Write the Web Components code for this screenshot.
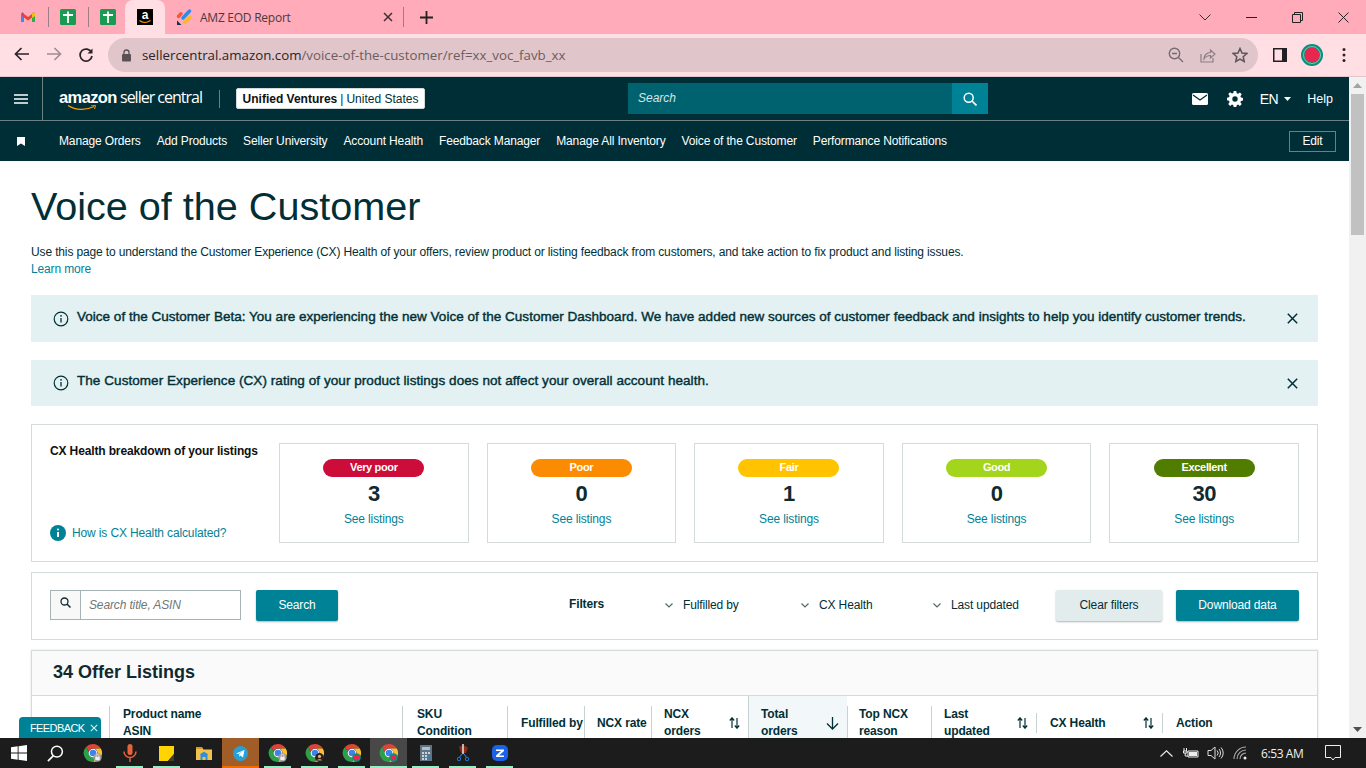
<!DOCTYPE html>
<html lang="en">
<head>
<meta charset="UTF-8">
<title>Voice of the Customer</title>
<style>
    html, body { margin: 0; height: 100%; overflow: hidden; background: #fff; }
    body { font-family: "Liberation Sans", Arial, sans-serif; color: #002f36; }
    #app { display: flex; flex-direction: column; height: 768px; width: 1366px; position: relative; }
</style>
</head>
<body>
<div id="app">
    <browser-frame url="sellercentral.amazon.com" path="/voice-of-the-customer/ref=xx_voc_favb_xx" tab="AMZ EOD Report"></browser-frame>
    <seller-header></seller-header>
    <seller-subnav></seller-subnav>
    <page-scroller>
        <voc-page></voc-page>
    </page-scroller>
    <feedback-tab></feedback-tab>
    <win-taskbar></win-taskbar>
</div>

<script>
    // small helper, every component sets its markup this way
    function shadow(el, html) {
        const root = el.attachShadow({mode: 'open'});
        root.innerHTML = html;
        return root;
    }

    // Chrome logo used in the taskbar, badge = lock | person | melon
    function chromeLogo(badge) {
        let extra = '';
        if (badge === 'lock') extra = '<circle cx="14.5" cy="14.5" r="4.2" fill="#9a9a9a"/><rect x="12.3" y="13.8" width="4.4" height="3.4" fill="#eee"/><path d="M13.2 13.8v-1.2a1.3 1.3 0 0 1 2.6 0v1.2" fill="none" stroke="#eee" stroke-width=".8"/>';
        if (badge === 'person') extra = '<circle cx="14.5" cy="14.5" r="4.4" fill="#2a2018"/><circle cx="14.5" cy="13.4" r="1.6" fill="#d8b08c"/><path d="M12 17.6c.5-2 4.5-2 5 0z" fill="#a87"/>';
        if (badge === 'melon') extra = '<circle cx="14.5" cy="14.5" r="4.3" fill="#0a8f7a"/><circle cx="14.5" cy="14.5" r="2.8" fill="#e8264f"/>';
        return `<svg width="20" height="20" viewBox="0 0 20 20">
            <path d="M10 1a9 9 0 0 1 7.800 4.500H10a4.500 4.500 0 0 0-4.300 3L3 4a9 9 0 0 1 7-3z" fill="#db4437"/>
            <path d="M17.800 5.500A9 9 0 0 1 10 19l3.900-6.700A4.500 4.500 0 0 0 13.900 7.700 4.500 4.500 0 0 0 10 5.500z" fill="#fbc02d"/>
            <path d="M3 4l3.900 6.800A4.500 4.500 0 0 0 13.900 12.300L10 19A9 9 0 0 1 3 4z" fill="#2e9e49"/>
            <circle cx="10" cy="10" r="4.300" fill="#fff"/><circle cx="10" cy="10" r="3.300" fill="#3f82ee"/>${extra}</svg>`;
    }

    customElements.define('browser-frame', class extends HTMLElement {
        connectedCallback() {
            shadow(this, `
            <style>
                :host { display: block; flex: none; font-family: "Roboto", "Liberation Sans", sans-serif; color: #222; }
                .strip { height: 34px; background: #ffabb9; display: flex; align-items: center; }
                .fav { width: 16px; height: 16px; display: flex; flex: none; }
                .sep { width: 1px; height: 20px; background: #9b7f85; flex: none; }
                .pin { display: flex; align-items: center; gap: 11.500px; padding-left: 20px; width: 125px; box-sizing: border-box; flex: none; }
                .active { width: 40px; height: 34px; background: #ffdfe4; border-radius: 8px 8px 0 0; display: flex; align-items: center; justify-content: center; flex: none; }
                .amz { width: 16px; height: 16px; background: #000; color: #fff; font: bold 12px/13px "Liberation Sans", sans-serif; text-align: center; position: relative; }
                .amz svg { position: absolute; left: 2px; bottom: 1px; }
                .tab { width: 239px; display: flex; align-items: center; padding-left: 11px; box-sizing: border-box; font: 12px "Open Sans", sans-serif; color: #4a3a3e; flex: none; }
                .tab .name { margin-left: 8px; flex: 1; white-space: nowrap; letter-spacing: -.25px; }
                .tab svg.x { margin-right: 10px; }
                .plus { margin-left: 16px; display: flex; }
                .win { margin-left: auto; display: flex; }
                .win div { width: 46px; height: 34px; display: flex; align-items: center; justify-content: center; }
                .bar { height: 42px; background: #ffdfe4; display: flex; align-items: center; border-bottom: 1px solid #e3c6cb; }
                .nav { width: 32px; display: flex; justify-content: center; flex: none; }
                .navs { display: flex; padding-left: 6px; width: 108px; box-sizing: border-box; flex: none; }
                .omni { width: 1150px; height: 34px; border-radius: 17px; background: #e0c6ca; display: flex; align-items: center; flex: none; }
                .omni .lock { margin-left: 13px; display: flex; }
                .url { margin-left: 10px; flex: 1; font: 13.300px "Open Sans", sans-serif; color: #6d5c60; }
                .url b { font-weight: 400; color: #2a2426; }
                .omni svg.act { margin-right: 16px; }
                .right { display: flex; align-items: center; }
                .right div { width: 32px; display: flex; justify-content: center; }
            </style>
            <div class="strip">
                <div class="pin">
                    <svg class="fav" viewBox="0 0 16 16"><path d="M1 13V4.500L2.500 3 4 4.500V13z" fill="#4285f4"/><path d="M12 13V4.500L13.500 3 15 4.500V13z" fill="#34a853"/><path d="M2 3.500L8 8l6-4.500V7L8 11.500 2 7z" fill="#ea4335"/><path d="M12 4.500l2-1.500 1 1.500V7l-3 2.200z" fill="#fbbc04"/></svg>
                    <span class="sep"></span>
                    <svg class="fav" viewBox="0 0 16 16"><rect width="16" height="16" rx="1.500" fill="#1a9a53"/><path d="M3 6h10M8 2.500V14" stroke="#fff" stroke-width="1.800"/></svg>
                    <span class="sep"></span>
                    <svg class="fav" viewBox="0 0 16 16"><rect width="16" height="16" rx="1.500" fill="#1a9a53"/><path d="M3 6h10M8 2.500V14" stroke="#fff" stroke-width="1.800"/></svg>
                </div>
                <div class="active">
                    <div class="amz">a<svg width="12" height="4" viewBox="0 0 12 4"><path d="M.5 .5c3 2.500 7 2.500 11 0" fill="none" stroke="#f90" stroke-width="1.100"/></svg></div>
                </div>
                <div class="tab">
                    <svg class="fav" viewBox="0 0 16 16"><path d="M7 9l6.500-7" stroke="#2d8bf0" stroke-width="3.400" stroke-linecap="round"/><path d="M2.500 7.500l2.500-2.800" stroke="#ef5a3c" stroke-width="3.400" stroke-linecap="round"/><path d="M8.500 13.500l5.500-5.500" stroke="#fcb72b" stroke-width="3.400" stroke-linecap="round"/><path d="M1 11.500V16h4.500z" fill="#1d2b52"/></svg>
                    <span class="name">${this.getAttribute('tab')}</span>
                    <svg class="x" width="10" height="10" viewBox="0 0 10 10"><path d="M1 1l8 8M9 1l-8 8" stroke="#3a3034" stroke-width="1.500"/></svg>
                    <span class="sep"></span>
                </div>
                <div class="plus"><svg width="13" height="13" viewBox="0 0 13 13"><path d="M6.500 0v13M0 6.500h13" stroke="#222" stroke-width="1.800"/></svg></div>
                <div class="win">
                    <div><svg width="12" height="7" viewBox="0 0 12 7"><path d="M.5 .5L6 6l5.500-5.500" fill="none" stroke="#333"/></svg></div>
                    <div><svg width="11" height="1" viewBox="0 0 11 1"><path d="M0 .5h11" stroke="#222"/></svg></div>
                    <div><svg width="11" height="11" viewBox="0 0 11 11"><path d="M.5 2.500h8v8h-8zM2.500 2.500v-2h8v8h-2" fill="none" stroke="#222"/></svg></div>
                    <div><svg width="11" height="11" viewBox="0 0 11 11"><path d="M.5 .5l10 10M10.500 .5l-10 10" stroke="#222"/></svg></div>
                </div>
            </div>
            <div class="bar">
                <div class="navs">
                    <div class="nav"><svg width="16" height="14" viewBox="0 0 16 14"><path d="M15 7H2M7.500 1L1.500 7l6 6" fill="none" stroke="#2b2327" stroke-width="1.700"/></svg></div>
                    <div class="nav"><svg width="16" height="14" viewBox="0 0 16 14"><path d="M1 7h13M8.500 1l6 6-6 6" fill="none" stroke="#a08d92" stroke-width="1.700"/></svg></div>
                    <div class="nav"><svg width="16" height="16" viewBox="0 0 16 16"><path d="M13.500 5.500A6 6 0 1 0 14 9" fill="none" stroke="#2b2327" stroke-width="1.700"/><path d="M14.500 1.500v5h-5z" fill="#2b2327"/></svg></div>
                </div>
                <div class="omni">
                    <span class="lock"><svg width="11" height="13" viewBox="0 0 11 13"><rect x="1" y="5" width="9" height="7.500" rx="1" fill="#5b5054"/><path d="M3 5V3.500a2.500 2.500 0 0 1 5 0V5" fill="none" stroke="#5b5054" stroke-width="1.300"/></svg></span>
                    <span class="url"><b>${this.getAttribute('url')}</b>${this.getAttribute('path')}</span>
                    <svg class="act" width="16" height="16" viewBox="0 0 16 16"><circle cx="6.500" cy="6.500" r="5.200" fill="none" stroke="#756a6d" stroke-width="1.400"/><path d="M10.500 10.500L15 15M4 6.500h5" stroke="#756a6d" stroke-width="1.400"/></svg>
                    <svg class="act" width="16" height="16" viewBox="0 0 16 16"><path d="M1 7v8h12v-4" fill="none" stroke="#8a7e81" stroke-width="1.200"/><path d="M4 12c0-4 3-6.500 6.500-6.500V3L15 7l-4.500 4V8.500C8 8.500 5.500 9.500 4 12z" fill="none" stroke="#8a7e81" stroke-width="1.200"/></svg>
                    <svg class="act" style="margin-right:10px" width="16" height="16" viewBox="0 0 16 16"><path d="M8 1.500l2 4.500 4.800.5-3.600 3.200 1 4.800L8 12.100 3.800 14.500l1-4.800L1.200 6.500 6 6z" fill="none" stroke="#5e5457" stroke-width="1.500"/></svg>
                </div>
                <div class="right" style="margin-left:6px">
                    <div><svg width="14" height="14" viewBox="0 0 14 14"><rect width="14" height="14" fill="#212025"/><rect x="1.500" y="1.500" width="7.500" height="11" fill="#ffdfe4"/></svg></div>
                    <div><svg width="22" height="22" viewBox="0 0 22 22"><circle cx="11" cy="11" r="11" fill="#0a8f7a"/><circle cx="11" cy="11" r="7.500" fill="#e8264f"/><circle cx="11" cy="11" r="8.500" fill="none" stroke="#dfe" stroke-width=".5"/></svg></div>
                    <div><svg width="4" height="16" viewBox="0 0 4 16"><circle cx="2" cy="2.500" r="1.500" fill="#2b2327"/><circle cx="2" cy="8" r="1.500" fill="#2b2327"/><circle cx="2" cy="13.500" r="1.500" fill="#2b2327"/></svg></div>
                </div>
            </div>`);
        }
    });

    customElements.define('seller-header', class extends HTMLElement {
        connectedCallback() {
            shadow(this, `
            <style>
                :host { display: flex; flex: none; height: 43px; background: #002e36; color: #fff; align-items: center; font-size: 12px; border-bottom: 1px solid #6c7f81; }
                .burger { width: 42px; height: 43px; display: flex; align-items: center; justify-content: center; border-right: 1px solid #6c7f81; flex: none; }
                .logo { margin-left: 16px; width: 160px; position: relative; font: 16px/18px "Open Sans", sans-serif; white-space: nowrap; letter-spacing: -1px; margin-top: -3px; flex: none; }
                .logo b { font: bold 16.500px/18px "Liberation Sans", sans-serif; letter-spacing: -.6px; }
                .logo svg { position: absolute; left: 8px; top: 17px; }
                .div { width: 1px; height: 18px; background: #6c7f81; flex: none; }
                .acct { margin-left: 16px; height: 21px; width: 189px; box-sizing: border-box; background: #fff; border-radius: 2px; color: #002f36; display: flex; align-items: center; justify-content: center; white-space: nowrap; border: 1px solid #d5dbdb; flex: none; }
                .acct b { margin-right: 3px; color: #0f1111; }
                .acct span { margin-left: 3px; }
                .search { margin-left: 203px; display: flex; height: 31px; flex: none; }
                .search div:first-child { width: 324px; background: #00626f; font-style: italic; color: #d4e6e8; line-height: 31px; padding-left: 10px; box-sizing: border-box; }
                .search div:last-child { width: 36px; background: #008296; display: flex; align-items: center; justify-content: center; }
                .tools { margin-left: auto; display: flex; align-items: center; flex: none; padding-right: 33px; }
                .lang { font-size: 14px; margin-left: 17px; letter-spacing: -.4px; }
            </style>
            <div class="burger"><svg width="14" height="10" viewBox="0 0 14 10"><path d="M0 1h14M0 5h14M0 9h14" stroke="#fff" stroke-width="1.500"/></svg></div>
            <div class="logo"><b>amazon</b> seller central<svg width="30" height="6" viewBox="0 0 30 6"><path d="M1 .5c8 5 18 5 26 1" fill="none" stroke="#f90" stroke-width="1.300"/><path d="M24 0l4.500 .5-1 3.500" fill="none" stroke="#f90" stroke-width="1"/></svg></div>
            <span class="div"></span>
            <div class="acct"><b>Unified Ventures</b>|<span>United States</span></div>
            <div class="search"><div>Search</div><div><svg width="14" height="14" viewBox="0 0 14 14"><circle cx="5.700" cy="5.700" r="4.500" fill="none" stroke="#fff" stroke-width="1.500"/><path d="M9 9l4.500 4.500" stroke="#fff" stroke-width="1.700"/></svg></div></div>
            <div class="tools">
                <svg width="16" height="12" viewBox="0 0 16 12"><rect width="16" height="12" rx="1.500" fill="#fff"/><path d="M1 2l7 5 7-5" fill="none" stroke="#002e36" stroke-width="1.300"/></svg>
                <svg style="margin-left:19px" width="16" height="16" viewBox="0 0 16 16"><path fill="#fff" fill-rule="evenodd" d="M6.700 0h2.600l.4 2.200 1.300.6 1.900-1.300 1.800 1.800-1.300 1.900.6 1.300 2 .4v2.600l-2 .4-.6 1.300 1.300 1.900-1.800 1.800-1.900-1.300-1.300.6-.4 2H6.700l-.4-2-1.300-.6-1.900 1.300-1.800-1.800L2.600 11 2 9.700 0 9.300V6.700l2-.4.6-1.300L1.300 3.100l1.800-1.800L5 2.600l1.300-.6zM8 5.300a2.700 2.700 0 1 0 0 5.400 2.700 2.700 0 0 0 0-5.400z"/></svg>
                <span class="lang">EN</span>
                <svg style="margin-left:6px" width="7" height="4" viewBox="0 0 7 4"><path d="M0 0h7L3.500 4z" fill="#fff"/></svg>
                <span style="margin-left:16px;font-size:12.500px">Help</span>
            </div>`);
        }
    });

    customElements.define('seller-subnav', class extends HTMLElement {
        connectedCallback() {
            const links = ['Manage Orders', 'Add Products', 'Seller University', 'Account Health', 'Feedback Manager', 'Manage All Inventory', 'Voice of the Customer', 'Performance Notifications'];
            shadow(this, `
            <style>
                :host { display: flex; flex: none; height: 40px; background: #002e36; color: #fff; align-items: center; font-size: 12px; padding-left: 17px; padding-right: 30px; letter-spacing: -.135px; }
                .links { margin-left: 34px; display: flex; gap: 16px; white-space: nowrap; flex: 1; }
                .edit { width: 47px; height: 21px; box-sizing: border-box; border: 1px solid #6c7f81; text-align: center; line-height: 19px; }
            </style>
            <svg width="8" height="9" viewBox="0 0 8 9"><path d="M0 0h8v9L4 6.500 0 9z" fill="#fff"/></svg>
            <div class="links">${links.map(l => `<span>${l}</span>`).join('')}</div>
            <div class="edit">Edit</div>`);
        }
    });

    customElements.define('page-scroller', class extends HTMLElement {
        connectedCallback() {
            shadow(this, `
            <style>
                :host { display: flex; flex: 1; min-height: 0; margin-top: -84px; }
                .view { flex: 1; min-width: 0; overflow: hidden; padding-top: 84px; }
                .bar { width: 17px; background: #f1f1f1; display: flex; flex-direction: column; align-items: center; position: relative; z-index: 1; }
                .up { margin-top: 6px; }
                .thumb { width: 13px; height: 141px; background: #c1c1c1; margin-top: 6px; }
                .down { margin-top: auto; margin-bottom: 6px; }
            </style>
            <div class="view"><slot></slot></div>
            <div class="bar">
                <svg class="up" width="9" height="5" viewBox="0 0 9 5"><path d="M4.500 0L9 5H0z" fill="#a3a3a3"/></svg>
                <div class="thumb"></div>
                <svg class="down" width="9" height="5" viewBox="0 0 9 5"><path d="M0 0h9L4.500 5z" fill="#505050"/></svg>
            </div>`);
        }
    });

    customElements.define('info-banner', class extends HTMLElement {
        connectedCallback() {
            shadow(this, `
            <style>
                :host { display: flex; align-items: center; height: var(--h, 47px); background: #e3f1f2; padding: 0 20px 0 22px; font-size: 13.500px; letter-spacing: var(--ls, .015px); color: #002f36; -webkit-text-stroke: .4px #002f36; }
                .i { flex: none; margin-right: 8px; display: flex; }
                .t { flex: 1; margin-top: -5px; white-space: nowrap; }
                .t.second { margin-top: -3px; }
            </style>
            <span class="i"><svg width="16" height="16" viewBox="0 0 16 16"><circle cx="8" cy="8" r="6.800" fill="none" stroke="#002f36" stroke-width="1.200"/><path d="M8 7v4.500" stroke="#002f36" stroke-width="1.300"/><circle cx="8" cy="4.800" r=".9" fill="#002f36"/></svg></span>
            <span class="t"><slot></slot></span>
            <svg width="11" height="11" viewBox="0 0 11 11"><path d="M.8 .8l9.400 9.400M10.200 .8L.8 10.200" stroke="#002f36" stroke-width="1.500"/></svg>`);
        }
    });

    customElements.define('cx-tile', class extends HTMLElement {
        connectedCallback() {
            shadow(this, `
            <style>
                :host { display: flex; flex-direction: column; align-items: center; flex: 1; height: 100px; box-sizing: border-box; border: 1px solid #d5dbdb; padding-top: 15px; }
                .pill { width: 101px; height: 18px; border-radius: 9px; color: #fff; font-size: 11px; font-weight: 700; text-align: center; line-height: 17px; background: var(--c); letter-spacing: -.35px; }
                .num { font-size: 22px; font-weight: 700; line-height: 24px; margin-top: 5px; color: #0f2a30; letter-spacing: -.5px; }
                .see { font-size: 12px; color: #008296; margin-top: 6px; }
            </style>
            <div class="pill"><slot></slot></div>
            <div class="num">${this.getAttribute('count')}</div>
            <div class="see">See listings</div>`);
        }
    });

    customElements.define('cx-breakdown', class extends HTMLElement {
        connectedCallback() {
            shadow(this, `
            <style>
                :host { display: flex; height: 138px; box-sizing: border-box; border: 1px solid #d5dbdb; padding: 18px; }
                .left { width: 229px; flex: none; display: flex; flex-direction: column; justify-content: space-between; font-size: 12px; }
                .left b { color: #0f1111; margin-top: 1px; }
                .how { display: flex; align-items: center; gap: 6px; color: #008296; margin-bottom: 2px; }
                .tiles { flex: 1; display: flex; gap: 18px; }
            </style>
            <div class="left">
                <b>CX Health breakdown of your listings</b>
                <div class="how"><svg width="16" height="16" viewBox="0 0 16 16"><circle cx="8" cy="8" r="8" fill="#008296"/><path d="M8 7v5" stroke="#fff" stroke-width="2"/><circle cx="8" cy="4.500" r="1.100" fill="#fff"/></svg>How is CX Health calculated?</div>
            </div>
            <div class="tiles"><slot></slot></div>`);
        }
    });

    customElements.define('listing-filters', class extends HTMLElement {
        connectedCallback() {
            const chev = '<svg width="8" height="5" viewBox="0 0 8 5"><path d="M.5 .5L4 4 7.500 .5" fill="none" stroke="#56686c" stroke-width="1.200"/></svg>';
            shadow(this, `
            <style>
                :host { display: flex; align-items: center; height: 68px; box-sizing: border-box; border: 1px solid #d5dbdb; padding: 0 18px 2px; font-size: 12px; color: #002f36; }
                .group { display: flex; width: 191px; height: 30px; box-sizing: border-box; border: 1px solid #a6b4b6; flex: none; }
                .ico { width: 30px; background: #f8f8f8; border-right: 1px solid #a6b4b6; display: flex; justify-content: center; padding-top: 6px; box-sizing: border-box; }
                .ph { padding-left: 8px; line-height: 28px; font-style: italic; color: #6c7778; }
                .btn { height: 31px; box-sizing: border-box; border-radius: 2px; line-height: 30px; text-align: center; box-shadow: 0 1px 2px rgba(0,0,0,.3); flex: none; }
                .go { background: #008296; color: #fff; }
                .clear { background: #e3eced; color: #002f36; }
                .f { display: flex; align-items: center; gap: 10px; flex: none; }
                .filters { font-weight: 700; color: #002f36; margin-left: 231px; width: 96px; flex: none; margin-top: -2px; }
            </style>
            <div class="group"><div class="ico"><svg width="11" height="11" viewBox="0 0 11 11"><circle cx="4.500" cy="4.500" r="3.500" fill="none" stroke="#0f2a30" stroke-width="1.300"/><path d="M7 7l3.500 3.500" stroke="#0f2a30" stroke-width="1.500"/></svg></div><div class="ph">Search title, ASIN</div></div>
            <div class="btn go" style="width:82px;margin-left:15px">Search</div>
            <div class="filters">Filters</div>
            <div class="f" style="width:136px">${chev}<span>Fulfilled by</span></div>
            <div class="f" style="width:132px">${chev}<span>CX Health</span></div>
            <div class="f" style="width:123px">${chev}<span>Last updated</span></div>
            <div class="btn clear" style="width:106px">Clear filters</div>
            <div class="btn go" style="width:123px;margin-left:14px">Download data</div>`);
        }
    });

    customElements.define('head-cell', class extends HTMLElement {
        connectedCallback() {
            const sort = this.getAttribute('sort');
            let icon = '';
            if (sort === 'both') icon = '<svg class="s" width="11" height="12" viewBox="0 0 11 12"><path d="M3 11V2M.8 3.500L3 .8l2.200 2.700" fill="none" stroke="#002f36" stroke-width="1.200"/><path d="M8 1v9M5.800 8.500L8 11.200l2.200-2.700" fill="none" stroke="#002f36" stroke-width="1.200"/></svg>';
            if (sort === 'down') icon = '<svg class="s" width="13" height="13" viewBox="0 0 13 13"><path d="M6.500 0v12M1 6.500l5.500 5.500L12 6.500" fill="none" stroke="#002f36" stroke-width="1.300"/></svg>';
            const pad = this.getAttribute('pad') || 13;
            shadow(this, `
            <style>
                :host { display: flex; align-items: center; padding: 0 0 0 ${pad}px; min-width: 0; font-size: 12px; font-weight: 700; line-height: 17px; color: #002f36; box-sizing: border-box; border-left: 1px solid #c8d2d3; height: 34px; }
                :host([short]) { height: 20px; }
                :host([active]) { background: #f2f8f9; height: 54px; }
                :host([blank]) { border: 0; }
                .t { flex: 1; white-space: nowrap; }
                .s { flex: none; margin-right: 8px; }
            </style>
            <div class="t"><slot></slot></div>${icon}`);
        }
    });

    customElements.define('listing-table', class extends HTMLElement {
        connectedCallback() {
            shadow(this, `
            <style>
                :host { display: block; border: 1px solid #d5dbdb; box-shadow: 0 0 2px rgba(0,0,0,.12); height: 200px; box-sizing: border-box; }
                h2 { margin: 0; height: 45px; box-sizing: border-box; background: #fafafa; border-bottom: 1px solid #d5dbdb; font-size: 18px; line-height: 43px; padding-left: 21px; color: #0f2a30; letter-spacing: 0; }
                .row { display: grid; grid-template-columns: 77px 293px 105px 77px 67px 97px 99px 84px 105px 126px 155px; align-items: center; height: 54px; }
            </style>
            <h2><slot name="title"></slot></h2>
            <div class="row"><slot></slot></div>`);
        }
    });

    customElements.define('voc-page', class extends HTMLElement {
        connectedCallback() {
            shadow(this, `
            <style>
                :host { display: block; padding: 0 31px; letter-spacing: -.135px; }
                h1 { font-size: 39.600px; font-weight: 400; line-height: 46px; margin: 0; padding-top: 22px; color: #002f36; letter-spacing: 0; }
                p { font-size: 12px; line-height: 17px; margin: 15px 0 0; color: #002f36; }
                .more { color: #008296; }
                .stack { margin-top: 17px; display: flex; flex-direction: column; }
                info-banner + info-banner { margin-top: 18px; --h: 46px; --ls: .06px; }
                cx-breakdown { margin-top: 18px; }
                listing-filters { margin-top: 10px; }
                listing-table { margin-top: 10px; }
            </style>
            <h1>Voice of the Customer</h1>
            <p>Use this page to understand the Customer Experience (CX) Health of your offers, review product or listing feedback from customers, and take action to fix product and listing issues.<br><span class="more">Learn more</span></p>
            <div class="stack">
                <info-banner>Voice of the Customer Beta: You are experiencing the new Voice of the Customer Dashboard. We have added new sources of customer feedback and insights to help you identify customer trends.</info-banner>
                <info-banner>The Customer Experience (CX) rating of your product listings does not affect your overall account health.</info-banner>
            </div>
            <cx-breakdown>
                <cx-tile count="3" style="--c:#cc0c39">Very poor</cx-tile>
                <cx-tile count="0" style="--c:#fb8b00">Poor</cx-tile>
                <cx-tile count="1" style="--c:#ffc300">Fair</cx-tile>
                <cx-tile count="0" style="--c:#a3d51d">Good</cx-tile>
                <cx-tile count="30" style="--c:#507c00">Excellent</cx-tile>
            </cx-breakdown>
            <listing-filters></listing-filters>
            <listing-table>
                <span slot="title">34 Offer Listings</span>
                <head-cell blank></head-cell>
                <head-cell>Product name<br>ASIN</head-cell>
                <head-cell pad="14">SKU<br>Condition</head-cell>
                <head-cell>Fulfilled by</head-cell>
                <head-cell pad="12">NCX rate</head-cell>
                <head-cell pad="12" sort="both">NCX<br>orders</head-cell>
                <head-cell pad="12" active sort="down">Total<br>orders</head-cell>
                <head-cell pad="11">Top NCX<br>reason</head-cell>
                <head-cell pad="12" sort="both">Last<br>updated</head-cell>
                <head-cell sort="both" short>CX Health</head-cell>
                <head-cell short>Action</head-cell>
            </listing-table>`);
        }
    });

    // sits over the page and the taskbar edge, so it's positioned
    customElements.define('feedback-tab', class extends HTMLElement {
        connectedCallback() {
            shadow(this, `
            <style>
                :host { position: absolute; left: 19px; top: 717px; width: 82px; height: 21px; background: #008296; color: #fff; border-radius: 4px 4px 0 0; display: flex; align-items: center; font-size: 11px; letter-spacing: -.6px; padding-left: 11px; box-sizing: border-box; gap: 5px; z-index: 3; }
            </style>
            FEEDBACK
            <svg width="8" height="8" viewBox="0 0 8 8"><path d="M.8 .8l6.400 6.400M7.200 .8L.8 7.200" stroke="#d9eef0" stroke-width="1.100"/></svg>`);
        }
    });

    customElements.define('win-taskbar', class extends HTMLElement {
        connectedCallback() {
            const cells = [
                {svg: '<svg width="16" height="16" viewBox="0 0 18 18"><path fill="#fff" d="M0 2.500l7.500-1v7H0zM8.500 1.300L18 0v8.500H8.500zM0 9.500h7.500v7l-7.500-1zM8.500 9.500H18V18l-9.500-1.300z"/></svg>'},
                {svg: '<svg width="17" height="17" viewBox="0 0 18 18"><circle cx="10.500" cy="7" r="5.800" fill="none" stroke="#fff" stroke-width="1.600"/><path d="M6.500 11.500L1 17" stroke="#fff" stroke-width="1.800"/></svg>'},
                {svg: chromeLogo('lock')},
                {svg: '<svg width="14" height="18" viewBox="0 0 14 18"><rect x="4.500" y="0" width="5" height="11" rx="2.500" fill="#e8623a"/><path d="M1 7.500a6 6 0 0 0 12 0M7 13.500V18" fill="none" stroke="#e8623a" stroke-width="1.500"/></svg>', run: 1},
                {svg: '<svg width="15" height="15" viewBox="0 0 15 15"><path d="M0 0h15v8l-6 7H0z" fill="#ffd400"/><path d="M15 8v7H9z" fill="#443f2a"/></svg>', run: 1},
                {svg: '<svg width="16" height="14" viewBox="0 0 16 14"><path d="M0 1.500h6l1.500 2H16V14H0z" fill="#f2c14e"/><path d="M0 1h6l1 2H0z" fill="#d99a2b"/><path d="M4.500 8h7v6h-2v-3h-3v3h-2z" fill="#2f8fd8"/><path d="M3.500 8.500L8 5.800l4.500 2.700z" fill="#2f8fd8"/></svg>'},
                {svg: '<svg width="15" height="15" viewBox="0 0 15 15"><circle cx="7.500" cy="7.500" r="7.500" fill="#2a9ed6"/><path d="M3 7.500l8.500-3.500-1.500 7.500-2.500-2-1 1.200-.4-2.400 3.600-3-4.400 2.600z" fill="#fff"/></svg>', bg: '#a05d28', line: '#f26b00'},
                {svg: chromeLogo('lock'), run: 1},
                {svg: chromeLogo('person'), run: 1},
                {svg: chromeLogo('melon'), run: 1},
                {svg: chromeLogo('melon'), bg: '#484848'},
                {svg: '<svg width="12" height="16" viewBox="0 0 12 16"><rect width="12" height="16" fill="#5f7382"/><rect x="2" y="2" width="8" height="3" fill="#a8c2d0"/><path d="M2 7h2v2H2zM5 7h2v2H5zM8 7h2v2H8zM2 10h2v2H2zM5 10h2v2H5zM2 13h2v2H2zM5 13h2v2H5z" fill="#c8d4dc"/><rect x="8" y="10" width="2" height="5" fill="#2d7fc1"/></svg>', run: 1},
                {svg: '<svg width="14" height="18" viewBox="0 0 14 18"><path d="M3 3a6 6 0 0 1 9 1l-2 5H5z" fill="#8a2a14"/><path d="M7 0v10" stroke="#ddd" stroke-width="1.600"/><path d="M6 10L3 14M8 10l3 4" stroke="#1c78d8" stroke-width="1.200"/><circle cx="3" cy="15" r="1.700" fill="none" stroke="#1c78d8"/><circle cx="11" cy="15" r="1.700" fill="none" stroke="#1c78d8"/></svg>', run: 1},
                {svg: '<svg width="16" height="16" viewBox="0 0 16 16"><rect width="16" height="16" rx="5" fill="#1a63e8"/><path d="M4 4.500h8v1.500L7 10.500h5V12H4v-1.500L9 6H4z" fill="#fff"/></svg>', run: 1}
            ];
            shadow(this, `
            <style>
                :host { display: flex; flex: none; height: 30px; background: #1c1c1c; color: #f0f0f0; align-items: stretch; position: relative; z-index: 4; font: 12px "Open Sans", sans-serif; }
                .cell { width: 37px; display: flex; align-items: center; justify-content: center; box-sizing: border-box; flex: none; position: relative; }
                .cell i { position: absolute; bottom: 0; left: var(--l, 5px); right: var(--l, 5px); height: 2px; background: var(--u, #99ecc4); }
                .tray { margin-left: auto; display: flex; align-items: center; padding-right: 25px; }
                .time { margin-left: 13px; width: 43px; white-space: nowrap; letter-spacing: -.4px; }
            </style>
            ${cells.map(c => {
                const under = c.line ? `<i style="--u:${c.line};--l:0"></i>` : c.bg ? '<i style="--l:0"></i>' : c.run ? '<i></i>' : '';
                return `<div class="cell" style="${c.bg ? 'background:' + c.bg : ''}">${c.svg}${under}</div>`;
            }).join('')}
            <div class="tray">
                <svg width="13" height="7" viewBox="0 0 13 7"><path d="M.5 6.500L6.500 .8l6 5.700" fill="none" stroke="#e8e8e8" stroke-width="1.200"/></svg>
                <svg style="margin-left:10px" width="16" height="11" viewBox="0 0 16 11"><path d="M5 3h10v6H5z" fill="none" stroke="#eee"/><rect x="6" y="4" width="8" height="4" fill="#eee"/><path d="M1 0v3M3.500 0v3M.5 3h3.500v2H.5zM2.200 5v3H5" stroke="#eee" fill="none"/></svg>
                <svg style="margin-left:8px" width="17" height="14" viewBox="0 0 17 14"><path d="M1 4.500h3L8 1v12L4 9.500H1z" fill="none" stroke="#ddd"/><path d="M10 4.500a3.500 3.500 0 0 1 0 5M12 3a6 6 0 0 1 0 8M14 1.500a8 8 0 0 1 0 11" fill="none" stroke="#ddd"/></svg>
                <svg style="margin-left:9px" width="15" height="14" viewBox="0 0 15 14"><path d="M1 13a12 12 0 0 1 12-12M4 13a9 9 0 0 1 9-9M7 13a6 6 0 0 1 6-6" fill="none" stroke="#aaa" stroke-width="1.100"/><circle cx="12" cy="12" r="1.500" fill="#eee"/></svg>
                <span class="time">6:53 AM</span>
                <svg style="margin-left:21px" width="16" height="16" viewBox="0 0 16 16"><path d="M.5 .5h15v12H10l-2 2.500-2-2.500H.5z" fill="none" stroke="#eee"/></svg>
            </div>`);
        }
    });
</script>
</body>
</html>
